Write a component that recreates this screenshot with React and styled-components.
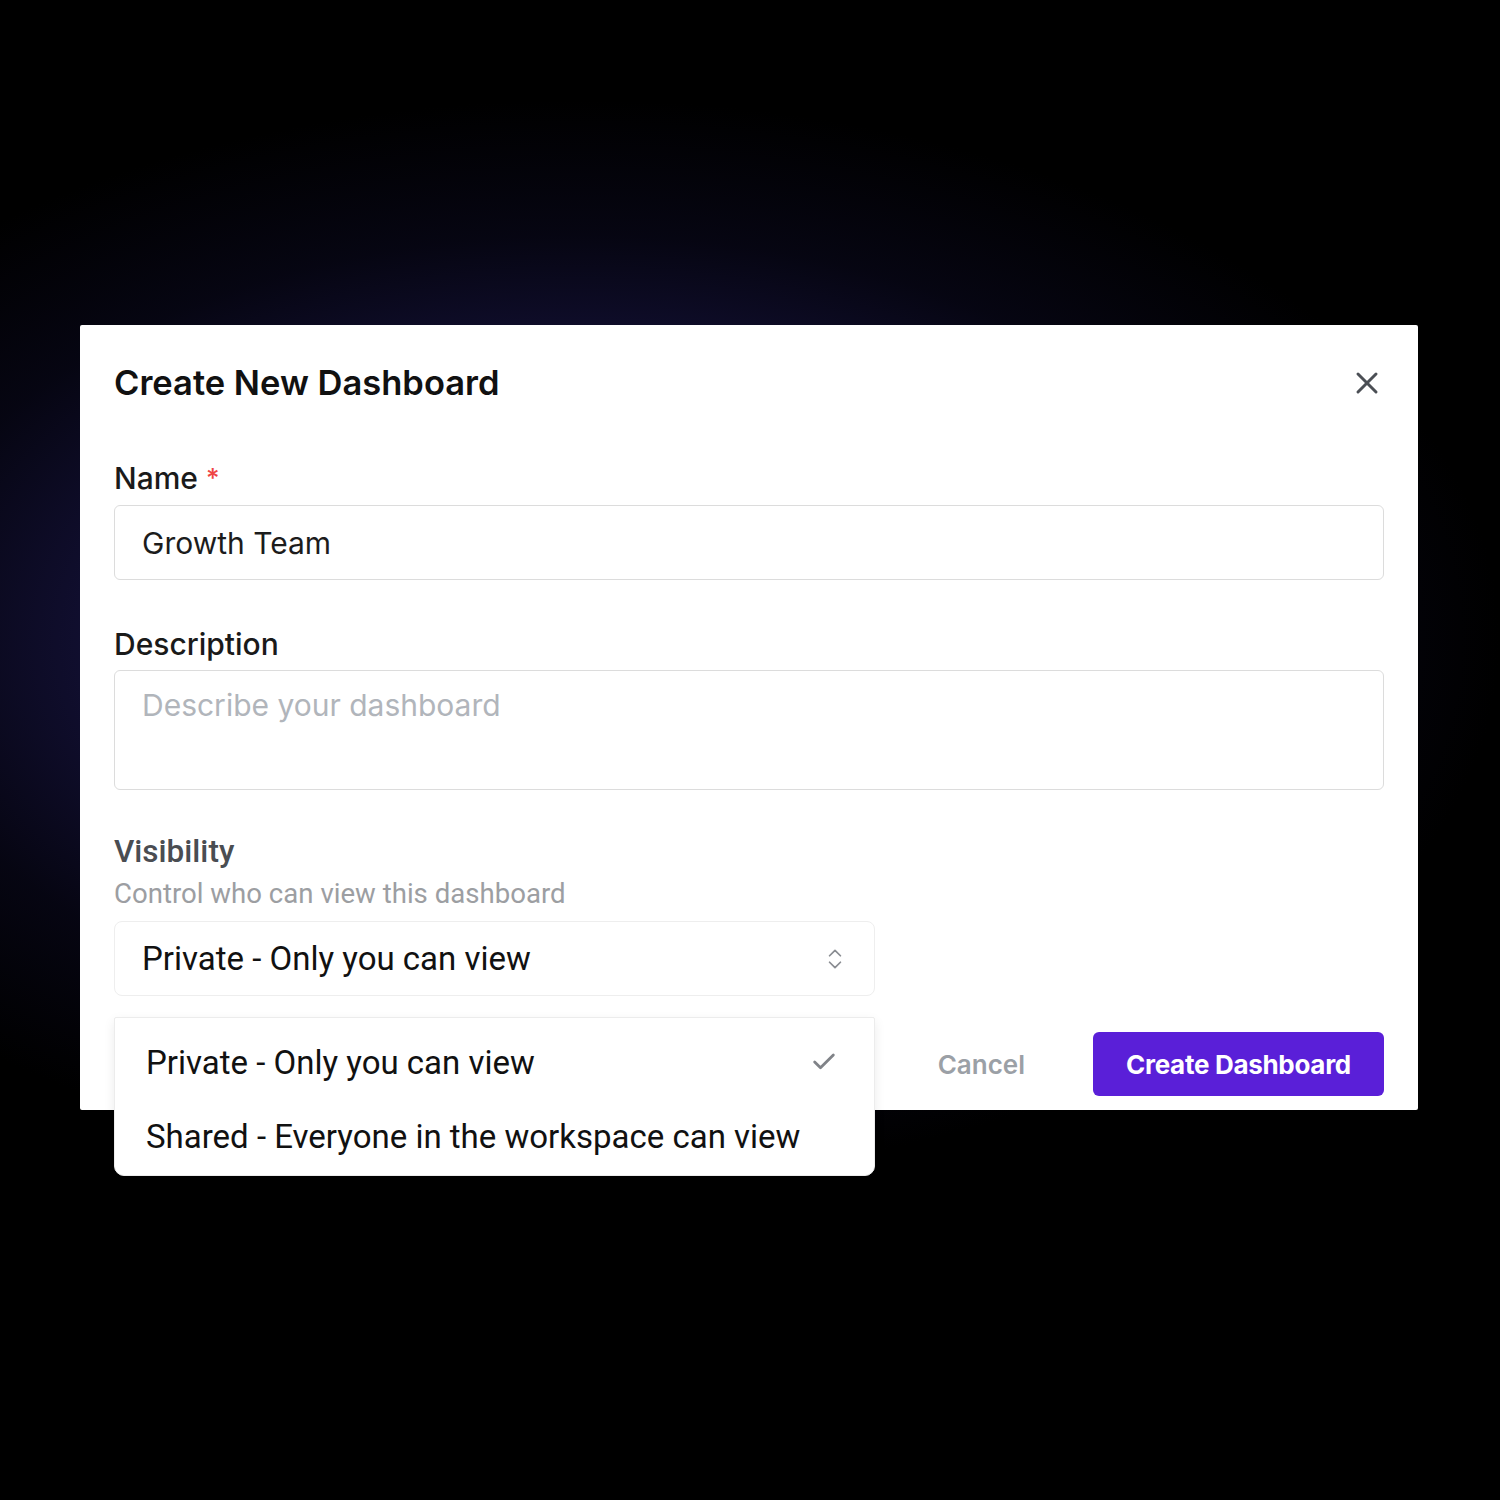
import React from "react";
import styled, { createGlobalStyle } from "styled-components";
import { X, Check, ChevronsUpDown } from "lucide-react";

const Global = createGlobalStyle`
  html, body { margin: 0; padding: 0; background: #000; }
  * { box-sizing: border-box; }
`;

const Page = styled.div`
  width: 1500px;
  height: 1500px;
  overflow: hidden;
  padding: 325px 0 0 80px;
  background:
    radial-gradient(ellipse 920px 540px at 580px 640px, rgba(32, 28, 88, 1) 0%, rgba(22, 19, 62, 0.95) 45%, rgba(10, 9, 30, 0.6) 75%, rgba(0, 0, 0, 0) 100%),
    #000;
  font-family: Inter, "Noto Sans", sans-serif;
`;

const Dialog = styled.div`
  position: relative;
  width: 1338px;
  height: 785px;
  background: #fff;
  border-radius: 2px;
  padding: 38px 34px 14px 34px;
  display: flex;
  flex-direction: column;
`;

const Header = styled.div`
  display: flex;
  align-items: center;
  justify-content: space-between;
  height: 40px;
`;

const Title = styled.h2`
  margin: 0;
  font-size: 34.5px;
  line-height: 40px;
  font-weight: 600;
  color: #111;
`;

const CloseButton = styled.button`
  border: none;
  background: none;
  padding: 0;
  width: 36px;
  height: 36px;
  margin-right: -1px;
  display: flex;
  align-items: center;
  justify-content: center;
  color: #4b4f55;
`;

const Field = styled.div`
  display: flex;
  flex-direction: column;
  margin-top: ${(p) => p.$top}px;
`;

const Label = styled.label`
  font-size: ${(p) => (p.$alt ? 31.5 : 30)}px;
  line-height: 36px;
  font-weight: 500;
  color: ${(p) => (p.$muted ? "#4a4d52" : "#1a1a1a")};
  font-family: ${(p) => (p.$alt ? "Roboto, sans-serif" : "Inter, sans-serif")};
`;

const Required = styled.span`
  color: #ef4444;
  margin-left: 8px;
  font-size: 26px;
  vertical-align: top;
`;

const Hint = styled.div`
  font-family: Roboto, sans-serif;
  font-size: 27.6px;
  line-height: 30px;
  color: #9c9ea2;
  margin-top: 9px;
`;

const Input = styled.div`
  margin-top: ${(p) => p.$gap}px;
  height: ${(p) => p.$h}px;
  border: 1.5px solid #dcdcdc;
  border-radius: 6px;
  padding: ${(p) => (p.$multi ? "16px 27px" : "0 27px")};
  display: flex;
  align-items: ${(p) => (p.$multi ? "flex-start" : "center")};
  font-size: 30px;
  line-height: 36px;
  color: ${(p) => (p.$placeholder ? "#b1b5bb" : "#1c1c1c")};
`;

const SelectWrap = styled.div`
  position: relative;
  width: 761px;
  margin-top: 12px;
`;

const SelectBox = styled.div`
  height: 75px;
  border: 1.5px solid #eeeeee;
  border-radius: 8px;
  padding: 0 26px 0 27px;
  display: flex;
  align-items: center;
  justify-content: space-between;
  font-family: Roboto, sans-serif;
  font-size: 33px;
  color: #111;
`;

const Menu = styled.div`
  position: absolute;
  left: 0;
  top: 96px;
  width: 761px;
  background: #fff;
  border: 1.5px solid #ececec;
  border-radius: 2px 2px 10px 10px;
  box-shadow: 0 4px 12px rgba(0, 0, 0, 0.08);
  padding: 7px 0 2px;
  z-index: 5;
`;

const MenuItem = styled.div`
  height: 74px;
  display: flex;
  align-items: center;
  justify-content: space-between;
  padding: 0 36px 0 31px;
  font-family: Roboto, sans-serif;
  font-size: 33px;
  color: #111;
`;

const Footer = styled.div`
  margin-top: 36px;
  display: flex;
  justify-content: flex-end;
  align-items: center;
  gap: 68px;
`;

const CancelButton = styled.button`
  border: none;
  background: none;
  padding: 0;
  font-family: Inter, sans-serif;
  font-size: 26px;
  font-weight: 600;
  color: #9ba0a6;
`;

const PrimaryButton = styled.button`
  height: 64px;
  width: 291px;
  border: none;
  border-radius: 6px;
  background: #5a1fd8;
  color: #fff;
  font-family: Inter, sans-serif;
  font-size: 26px;
  font-weight: 700;
  letter-spacing: -0.3px;
`;

export default function App() {
  return (
    <>
      <Global />
      <Page>
        <Dialog>
          <Header>
            <Title>Create New Dashboard</Title>
            <CloseButton aria-label="Close">
              <X size={36} strokeWidth={2} />
            </CloseButton>
          </Header>

          <Field $top={57}>
            <Label>
              Name<Required>*</Required>
            </Label>
            <Input $gap={9} $h={75}>Growth Team</Input>
          </Field>

          <Field $top={46}>
            <Label>Description</Label>
            <Input $gap={8} $h={120} $multi $placeholder>
              Describe your dashboard
            </Input>
          </Field>

          <Field $top={44}>
            <Label $alt $muted>Visibility</Label>
            <Hint>Control who can view this dashboard</Hint>
            <SelectWrap>
              <SelectBox>
                <span>Private - Only you can view</span>
                <ChevronsUpDown size={26} strokeWidth={1.6} color="#8a8d92" />
              </SelectBox>
              <Menu>
                <MenuItem>
                  <span>Private - Only you can view</span>
                  <Check size={28} strokeWidth={2.4} color="#808388" />
                </MenuItem>
                <MenuItem>
                  <span>Shared - Everyone in the workspace can view</span>
                </MenuItem>
              </Menu>
            </SelectWrap>
          </Field>

          <Footer>
            <CancelButton>Cancel</CancelButton>
            <PrimaryButton>Create Dashboard</PrimaryButton>
          </Footer>
        </Dialog>
      </Page>
    </>
  );
}
